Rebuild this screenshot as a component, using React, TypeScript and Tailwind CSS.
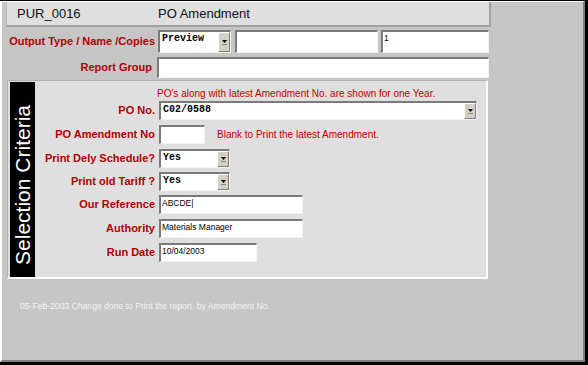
import { ReactNode } from "react";

const sunken =
  "border-t-2 border-l-2 border-t-[#7a7a7a] border-l-[#7a7a7a] border-b border-r border-b-[#f4f4f4] border-r-[#f4f4f4] bg-white";

function Arrow() {
  return (
    <div className="w-[12px] h-full bg-[#d4d0c8] border-t border-l border-t-white border-l-white border-b border-r border-b-[#808080] border-r-[#808080] flex items-center justify-center">
      <svg width="7" height="6" viewBox="0 0 7 6">
        <path d="M1 1h5L3.5 4z" fill="#000" />
        <rect x="1" y="5" width="5" height="0.6" fill="#555" />
      </svg>
    </div>
  );
}

function Select({ value, w, h }: { value: string; w: string; h: string }) {
  return (
    <div className={`${sunken} ${w} ${h} flex`}>
      <div className="flex-1 pl-[2px] pt-[1px] text-[10px] font-bold leading-[12px] text-black font-['Liberation_Mono',monospace]">
        {value}
      </div>
      <Arrow />
    </div>
  );
}

function Input({ value, w, h }: { value?: string; w: string; h: string }) {
  return (
    <div
      className={`${sunken} ${w} ${h} pl-[1px] pt-[1px] text-[8.5px] leading-[11px] text-black font-['Liberation_Sans',sans-serif]`}
    >
      {value}
    </div>
  );
}

function Row({
  label,
  children,
  mt,
}: {
  label: string;
  children: ReactNode;
  mt: string;
}) {
  return (
    <div className={`flex items-center h-[19px] ${mt}`}>
      <div className="w-[124px] pr-[4px] text-right text-[11px] font-bold text-[#b00000]">
        {label}
      </div>
      {children}
    </div>
  );
}

export default function App() {
  return (
    <div className="w-[588px] h-[365px] bg-black pt-px pr-[3px] pb-[3px] font-['Liberation_Sans',Arial,sans-serif]">
      <div className="h-full bg-[#c6c6c6] border-t border-l-2 border-t-white border-l-white border-r-2 border-b-2 border-r-[#7e7e7e] border-b-[#7e7e7e] pl-1 flex flex-col">

        {/* HEADER */}

        <div className="w-[485px] h-[25px] bg-[#dfdfdf] border-l border-l-[#bdbdbd] border-r-2 border-b-2 border-r-[#a2a2a2] border-b-[#a2a2a2] flex items-center text-[13px] text-[#111]">
          <span className="ml-[10px] w-[141px]">PUR_0016</span>
          <span>PO Amendment</span>
        </div>

        {/* OUTPUT */}

        <div className="flex items-center mt-[3px] h-[23px]">
          <div className="w-[152px] pr-[3px] text-right text-[11px] font-bold text-[#b00000]">
            Output Type / Name /Copies
          </div>
          <div className="flex gap-[4px]">
            <Select value="Preview" w="w-[73px]" h="h-[23px]" />
            <Input w="w-[143px]" h="h-[23px]" />
          </div>
          <div className="ml-[3px]">
            <Input value="1" w="w-[108px]" h="h-[23px]" />
          </div>
        </div>

        <div className="flex items-center mt-[4px] h-[21px]">
          <div className="w-[151px] pr-[5px] text-right text-[11px] font-bold text-[#b00000]">
            Report Group
          </div>
          <Input w="w-[332px]" h="h-[21px]" />
        </div>

        {/* SELECTION CRITERIA */}

        <div className="ml-px mt-[2px] w-[481px] h-[199px] bg-[#dfdfdf] border-t border-l border-t-[#b0b0b0] border-l-[#b0b0b0] border-r-2 border-b-2 border-r-white border-b-white flex pl-[2px] pt-px">

          <div className="w-[25px] h-[195px] bg-black flex items-center justify-center pt-[10px]">
            <span className="[writing-mode:vertical-rl] rotate-180 text-white text-[21px] leading-none whitespace-nowrap">
              Selection Criteria
            </span>
          </div>

          <div className="flex flex-col">

            <div className="mt-[5px] h-[13px] pl-[122px] text-[10px] leading-[13px] text-[#c00000] whitespace-nowrap">
              PO's along with latest Amendment No. are shown for one Year.
            </div>

            <Row label="PO No." mt="mt-px">
              <Select value="C02/0588" w="w-[318px]" h="h-[19px]" />
            </Row>

            <Row label="PO Amendment No" mt="mt-[5px]">
              <Input w="w-[46px]" h="h-[19px]" />
              <span className="ml-[12px] text-[10px] text-[#c00000] whitespace-nowrap">
                Blank to Print the latest Amendment.
              </span>
            </Row>

            <Row label="Print Dely Schedule?" mt="mt-[5px]">
              <Select value="Yes" w="w-[71px]" h="h-[19px]" />
            </Row>

            <Row label="Print old Tariff ?" mt="mt-[4px]">
              <Select value="Yes" w="w-[71px]" h="h-[19px]" />
            </Row>

            <Row label="Our Reference" mt="mt-[4px]">
              <Input value="ABCDE|" w="w-[144px]" h="h-[19px]" />
            </Row>

            <Row label="Authority" mt="mt-[5px]">
              <Input value="Materials Manager" w="w-[144px]" h="h-[19px]" />
            </Row>

            <Row label="Run Date" mt="mt-[5px]">
              <Input value="10/04/2003" w="w-[98px]" h="h-[19px]" />
            </Row>

          </div>
        </div>

        {/* FOOTER NOTE */}

        <div className="mt-[21px] ml-[14px] text-[8.6px] text-[#f2f2f2] whitespace-nowrap">
          05-Feb-2003 Change done to Print the report&nbsp; by Amendment No.
        </div>

      </div>
    </div>
  );
}
